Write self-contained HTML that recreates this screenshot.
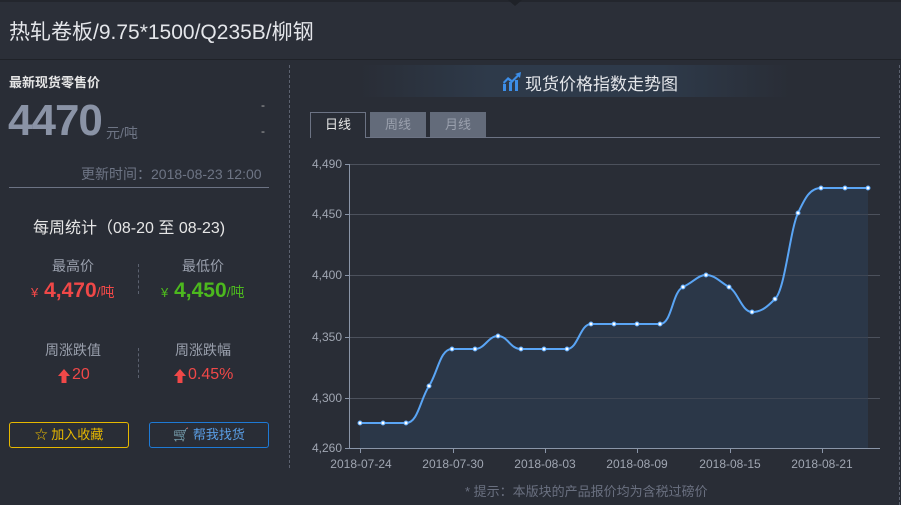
<!DOCTYPE html>
<html><head><meta charset="utf-8"><style>
*{margin:0;padding:0;box-sizing:border-box}
body{width:901px;height:504px;background:#292d36;font-family:"Liberation Sans","Noto Sans CJK SC",sans-serif;position:relative;overflow:hidden;color:#ccc}
.a{position:absolute;white-space:nowrap}
</style></head><body>
<div class="a" style="left:0;top:0;width:901px;height:60px;background:#2b2f38;border-top:2px solid #23262d;border-bottom:1px solid #1f2228"></div>
<div class="a" style="left:508px;top:0;width:0;height:0;border-left:7px solid transparent;border-right:7px solid transparent;border-top:6px solid #1f2228"></div>
<div class="a" style="left:9px;top:16px;font-size:21px;color:#e4e6ea">热轧卷板/9.75*1500/Q235B/柳钢</div>

<div class="a" style="left:9px;top:72px;font-size:13px;color:#e6e6e6;font-weight:bold">最新现货零售价</div>
<div class="a" style="left:8px;top:96px;font-size:44px;font-weight:bold;color:#8a93a6;letter-spacing:-1px">4470</div>
<div class="a" style="left:106px;top:123px;font-size:14px;color:#6e7585">元/吨</div>
<div class="a" style="left:261px;top:98px;font-size:12px;color:#aaa">-</div>
<div class="a" style="left:261px;top:124px;font-size:12px;color:#aaa">-</div>
<div class="a" style="left:81px;top:164px;font-size:14px;color:#6e7585">更新时间：2018-08-23 12:00</div>
<div class="a" style="left:9px;top:187px;width:260px;height:1px;background:#6c7384"></div>
<div class="a" style="left:33px;top:214px;font-size:16px;color:#e6e6e6">每周统计（08-20 至 08-23)</div>

<div class="a" style="left:52px;top:256px;font-size:14px;color:#9aa0ad">最高价</div>
<div class="a" style="left:31px;top:279px;font-size:21px;color:#f04848;font-weight:bold"><span style="font-size:13px;font-weight:normal">¥</span> 4,470<span style="font-size:14px;font-weight:normal">/吨</span></div>
<div class="a" style="left:182px;top:256px;font-size:14px;color:#9aa0ad">最低价</div>
<div class="a" style="left:161px;top:279px;font-size:21px;color:#4cb81e;font-weight:bold"><span style="font-size:13px;font-weight:normal">¥</span> 4,450<span style="font-size:14px;font-weight:normal">/吨</span></div>
<div class="a" style="left:138px;top:264px;height:30px;border-left:1px dashed #5c6270"></div>
<div class="a" style="left:45px;top:340px;font-size:14px;color:#9aa0ad">周涨跌值</div>
<svg class="a" style="left:58px;top:369px" width="12" height="14"><path d="M6 0 L12 7 L8.5 7 L8.5 14 L3.5 14 L3.5 7 L0 7Z" fill="#f04848"/></svg>
<div class="a" style="left:72px;top:366px;font-size:16px;color:#f04848">20</div>
<div class="a" style="left:175px;top:340px;font-size:14px;color:#9aa0ad">周涨跌幅</div>
<svg class="a" style="left:174px;top:369px" width="12" height="14"><path d="M6 0 L12 7 L8.5 7 L8.5 14 L3.5 14 L3.5 7 L0 7Z" fill="#f04848"/></svg>
<div class="a" style="left:188px;top:366px;font-size:16px;color:#f04848">0.45%</div>
<div class="a" style="left:138px;top:348px;height:30px;border-left:1px dashed #5c6270"></div>

<div class="a" style="left:9px;top:422px;width:120px;height:26px;border:1px solid #e6b800;border-radius:3px;color:#e6b800;font-size:13px;text-align:center;line-height:24px">☆ 加入收藏</div>
<div class="a" style="left:149px;top:422px;width:120px;height:26px;border:1px solid #1e7ad6;border-radius:3px;color:#5a9ee6;font-size:13px;text-align:center;line-height:24px">🛒 帮我找货</div>

<div class="a" style="left:289px;top:65px;height:403px;border-left:1px dashed #5c6270"></div>
<div class="a" style="left:899px;top:65px;height:440px;border-left:1px dashed #5c6270"></div>

<div class="a" style="left:360px;top:65px;width:430px;height:32px;background:linear-gradient(90deg,#292d36,#2e3a4a 30%,#2e3a4a 70%,#292d36)"></div>
<svg class="a" style="left:502px;top:72px" width="20" height="20" viewBox="0 0 20 20"><g fill="#3d8ee8"><rect x="1" y="12" width="3" height="7"/><rect x="7" y="10" width="3" height="9"/><rect x="13" y="8" width="3" height="11"/><path d="M1 10 L6 5 L10 8 L15 3 L13 2 L19 0 L18 6 L16.5 4.5 L10 11 L6 8 L2 12Z"/></g></svg>
<div class="a" style="left:525px;top:70px;font-size:17px;color:#e4e6ea">现货价格指数走势图</div>

<div class="a" style="left:310px;top:112px;width:56px;height:26px;border:1px solid #6c7384;border-bottom:none;background:#292d36;color:#e6e6e6;font-size:13px;text-align:center;line-height:24px">日线</div>
<div class="a" style="left:370px;top:112px;width:56px;height:25px;background:#636b7a;color:#9aa0ad;font-size:13px;text-align:center;line-height:25px">周线</div>
<div class="a" style="left:430px;top:112px;width:56px;height:25px;background:#636b7a;color:#9aa0ad;font-size:13px;text-align:center;line-height:25px">月线</div>
<div class="a" style="left:366px;top:137px;width:514px;height:1px;background:#6c7384"></div>

<svg class="a" style="left:0;top:0" width="901" height="504">
<g stroke="#4c515c" stroke-width="1">
<line x1="345" y1="164.5" x2="880" y2="164.5"/><line x1="345" y1="214.5" x2="880" y2="214.5"/><line x1="345" y1="275.5" x2="880" y2="275.5"/><line x1="345" y1="337.5" x2="880" y2="337.5"/><line x1="345" y1="398.5" x2="880" y2="398.5"/>
</g>
<path d="M360 423 L383 423 L406 423 C418 423 420 400 429 386 C438 372 440 349 452 349 L475 349 C485 349 488 336 498 336 C508 336 510 349 521 349 L567 349 C578 349 580 324 591 324 L660 324 C672 324 672 292 683 287 C694 282 698 275 706 275 C715 275 720 282 729 287 C738 292 742 312 752 312 C762 312 768 306 775 299 C785 290 790 230 798 213 C805 198 810 188 821 188 L868 188 L868 448 L360 448Z" fill="#2b3748"/>
<g stroke="#4c515c" stroke-width="1" opacity="0.6">
<line x1="360" y1="398.5" x2="868" y2="398.5"/><line x1="360" y1="337.5" x2="868" y2="337.5"/><line x1="360" y1="275.5" x2="868" y2="275.5"/><line x1="360" y1="214.5" x2="868" y2="214.5"/>
</g>
<path d="M360 423 L383 423 L406 423 C418 423 420 400 429 386 C438 372 440 349 452 349 L475 349 C485 349 488 336 498 336 C508 336 510 349 521 349 L567 349 C578 349 580 324 591 324 L660 324 C672 324 672 292 683 287 C694 282 698 275 706 275 C715 275 720 282 729 287 C738 292 742 312 752 312 C762 312 768 306 775 299 C785 290 790 230 798 213 C805 198 810 188 821 188 L868 188" fill="none" stroke="#5aa5f5" stroke-width="2"/>
<g fill="#fff" stroke="#5aa5f5" stroke-width="1">
<circle cx="360" cy="423" r="2"/><circle cx="383" cy="423" r="2"/><circle cx="406" cy="423" r="2"/><circle cx="429" cy="386" r="2"/><circle cx="452" cy="349" r="2"/><circle cx="475" cy="349" r="2"/><circle cx="498" cy="336" r="2"/><circle cx="521" cy="349" r="2"/><circle cx="544" cy="349" r="2"/><circle cx="567" cy="349" r="2"/><circle cx="591" cy="324" r="2"/><circle cx="614" cy="324" r="2"/><circle cx="637" cy="324" r="2"/><circle cx="660" cy="324" r="2"/><circle cx="683" cy="287" r="2"/><circle cx="706" cy="275" r="2"/><circle cx="729" cy="287" r="2"/><circle cx="752" cy="312" r="2"/><circle cx="775" cy="299" r="2"/><circle cx="798" cy="213" r="2"/><circle cx="821" cy="188" r="2"/><circle cx="845" cy="188" r="2"/><circle cx="868" cy="188" r="2"/>
</g>
<g stroke="#8a95a8" stroke-width="1">
<line x1="349.5" y1="164" x2="349.5" y2="448"/><line x1="349" y1="448.5" x2="880" y2="448.5"/>
<line x1="345" y1="164.5" x2="349" y2="164.5"/><line x1="345" y1="214.5" x2="349" y2="214.5"/><line x1="345" y1="275.5" x2="349" y2="275.5"/><line x1="345" y1="337.5" x2="349" y2="337.5"/><line x1="345" y1="398.5" x2="349" y2="398.5"/><line x1="345" y1="448.5" x2="349" y2="448.5"/>
<line x1="360.5" y1="448" x2="360.5" y2="453"/><line x1="453.5" y1="448" x2="453.5" y2="453"/><line x1="545.5" y1="448" x2="545.5" y2="453"/><line x1="637.5" y1="448" x2="637.5" y2="453"/><line x1="730.5" y1="448" x2="730.5" y2="453"/><line x1="822.5" y1="448" x2="822.5" y2="453"/>
</g>
<g fill="#a0a6b2" font-size="12" font-family="Liberation Sans, sans-serif" text-anchor="end">
<text x="342" y="168">4,490</text><text x="342" y="218">4,450</text><text x="342" y="279">4,400</text><text x="342" y="341">4,350</text><text x="342" y="402">4,300</text><text x="342" y="452">4,260</text>
</g>
<g fill="#a0a6b2" font-size="12" font-family="Liberation Sans, sans-serif" text-anchor="middle">
<text x="361" y="468">2018-07-24</text><text x="453" y="468">2018-07-30</text><text x="545" y="468">2018-08-03</text><text x="637" y="468">2018-08-09</text><text x="730" y="468">2018-08-15</text><text x="822" y="468">2018-08-21</text>
</g>
</svg>
<div class="a" style="left:465px;top:481px;font-size:13px;color:#6a7080">* 提示：本版块的产品报价均为含税过磅价</div>
</body></html>
